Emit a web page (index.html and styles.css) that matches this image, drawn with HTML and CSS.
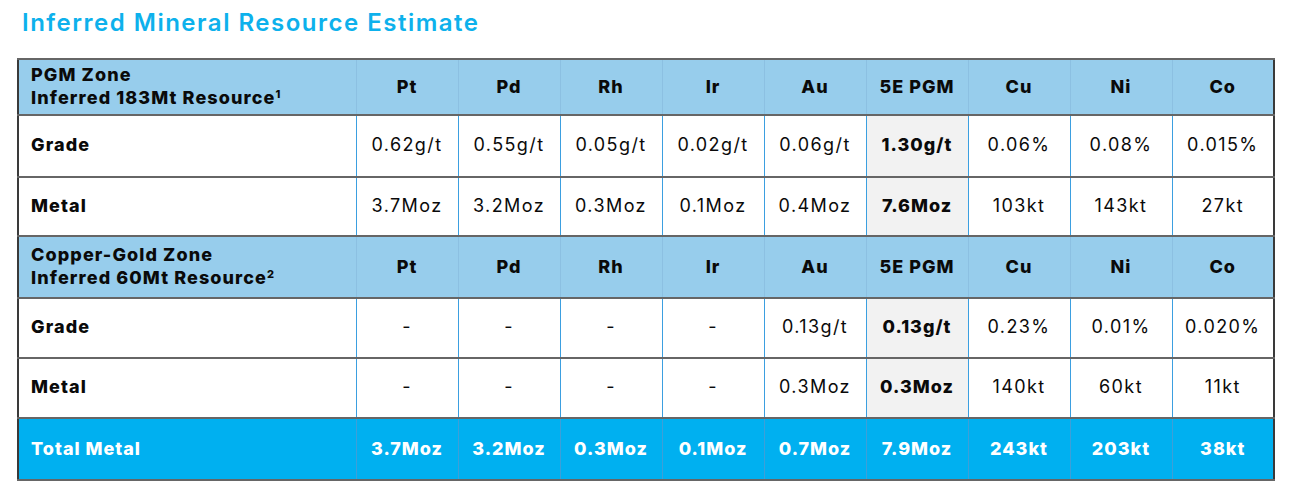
FILE: index.html
```html
<!DOCTYPE html>
<html>
<head>
<meta charset="utf-8">
<link rel="stylesheet" href="styles.css">
</head>
<body>
<h1 class="title">Inferred Mineral Resource Estimate</h1>
<table class="res">
  <colgroup>
    <col class="c-label">
    <col class="c-val"><col class="c-val"><col class="c-val"><col class="c-val"><col class="c-val">
    <col class="c-val"><col class="c-val"><col class="c-val"><col class="c-val">
  </colgroup>
  <tr class="head h1">
    <th class="label">PGM Zone<br>Inferred 183Mt Resource<sup>1</sup></th>
    <th>Pt</th><th>Pd</th><th>Rh</th><th>Ir</th><th>Au</th><th>5E PGM</th><th>Cu</th><th>Ni</th><th>Co</th>
  </tr>
  <tr class="row r-grade">
    <td class="label">Grade</td>
    <td>0.62g/t</td><td>0.55g/t</td><td>0.05g/t</td><td>0.02g/t</td><td>0.06g/t</td><td class="hl">1.30g/t</td><td>0.06%</td><td>0.08%</td><td>0.015%</td>
  </tr>
  <tr class="row r-metal">
    <td class="label">Metal</td>
    <td>3.7Moz</td><td>3.2Moz</td><td>0.3Moz</td><td>0.1Moz</td><td>0.4Moz</td><td class="hl">7.6Moz</td><td>103kt</td><td>143kt</td><td>27kt</td>
  </tr>
  <tr class="head h2">
    <th class="label">Copper-Gold Zone<br>Inferred 60Mt Resource<sup>2</sup></th>
    <th>Pt</th><th>Pd</th><th>Rh</th><th>Ir</th><th>Au</th><th>5E PGM</th><th>Cu</th><th>Ni</th><th>Co</th>
  </tr>
  <tr class="row r-grade2">
    <td class="label">Grade</td>
    <td>-</td><td>-</td><td>-</td><td>-</td><td>0.13g/t</td><td class="hl">0.13g/t</td><td>0.23%</td><td>0.01%</td><td>0.020%</td>
  </tr>
  <tr class="row r-metal2">
    <td class="label">Metal</td>
    <td>-</td><td>-</td><td>-</td><td>-</td><td>0.3Moz</td><td class="hl">0.3Moz</td><td>140kt</td><td>60kt</td><td>11kt</td>
  </tr>
  <tr class="total">
    <td class="label">Total Metal</td>
    <td>3.7Moz</td><td>3.2Moz</td><td>0.3Moz</td><td>0.1Moz</td><td>0.7Moz</td><td>7.9Moz</td><td>243kt</td><td>203kt</td><td>38kt</td>
  </tr>
</table>
</body>
</html>
```

FILE: styles.css
```css
html, body {
  margin: 0;
  padding: 0;
  background: #ffffff;
}
body {
  font-family: "Inter", "Noto Sans", sans-serif;
  color: #000;
  padding: 7px 0 0 17px;
}
.title {
  margin: 0 0 20px 5px;
  font-size: 24px;
  line-height: 31px;
  font-weight: 600;
  color: #0db1ec;
  letter-spacing: 1.5px;
}
.res {
  border-collapse: collapse;
  table-layout: fixed;
  width: 1257px;
  border: 2px solid #3a3a3a;
}
.c-label { width: 338px; }
.c-val { width: 102px; }
.res th, .res td {
  border-left: 1px solid #3b9fe0;
  border-right: 1px solid #3b9fe0;
  border-top: 2px solid #666;
  border-bottom: 2px solid #666;
  text-align: center;
  padding: 0;
  font-size: 18px;
  color: #0a0a0a;
}
.res th {
  font-weight: 800;
  letter-spacing: 1px;
}
.res td {
  font-weight: 400;
  letter-spacing: 1.4px;
}
.res .label {
  text-align: left;
  padding-left: 12px;
  font-weight: 800;
  font-size: 18px;
  line-height: 23px;
  letter-spacing: 1.1px;
}
.head {
  background: #97cdec;
}
.head th { border-left-color: #8cc0e2; border-right-color: #8cc0e2; }
.head th.label { border-left: 2px solid #3a3a3a; }
.h1 { height: 56px; }
.h2 { height: 62px; }
.r-grade { height: 62px; }
.r-metal { height: 59px; }
.r-grade2, .r-metal2 { height: 60px; }
.row td { padding-bottom: 3px; }
.head th { padding-bottom: 2px; }
.res sup {
  font-size: 11px;
  line-height: 0;
  vertical-align: 6px;
}
.res td.hl {
  background: #f2f2f2;
  font-weight: 800;
  letter-spacing: 1px;
}
.total {
  background: #00b0f0;
  height: 62px;
}
.res .total td {
  color: #fff;
  font-weight: 800;
  letter-spacing: 1px;
  padding-bottom: 2px;
  border-left-color: #3d9fd8;
  border-right-color: #3d9fd8;
}
```
